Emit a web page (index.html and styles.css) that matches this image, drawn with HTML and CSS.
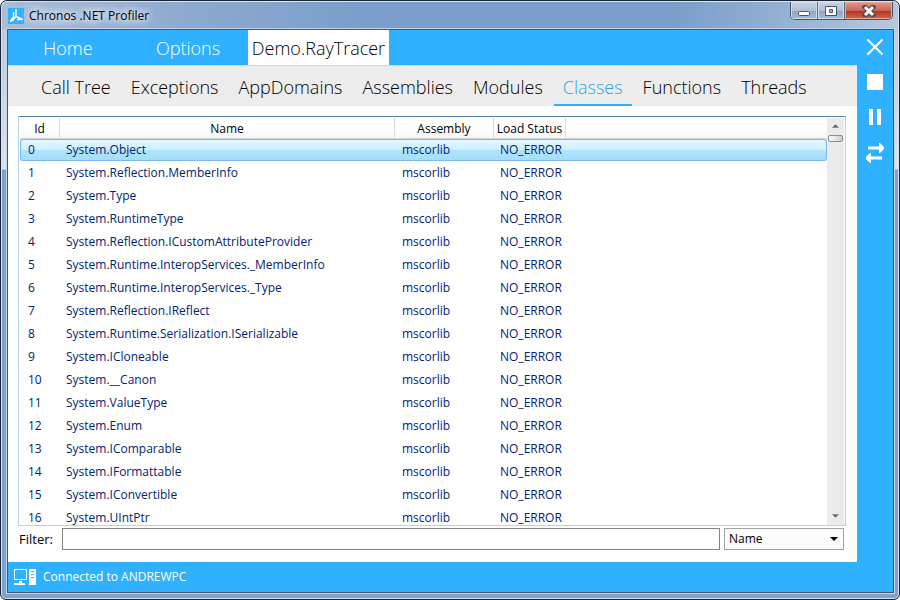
FILE: index.html
```html
<!DOCTYPE html>
<html lang="en">
<head>
<meta charset="utf-8">
<title>Chronos .NET Profiler</title>
<link rel="stylesheet" href="styles.css">
</head>
<body>
<div class="window">
  <header class="titlebar">
    <svg class="app-icon" viewBox="0 0 16 16" aria-hidden="true"><rect width="16" height="16" fill="#2fb1ff"/><path d="M8 1V8.500L14.500 11.500H9M8 8.500L3.500 13.500M5.500 4V9L2 13.500" fill="none" stroke="#fff" stroke-width="1.400"/></svg>
    <h1 class="title">Chronos .NET Profiler</h1>
    <div class="caption-buttons">
      <button class="cap" aria-label="Minimize"><svg viewBox="0 0 14 12"><rect x="1.500" y="6.500" width="11" height="4" rx="1" fill="#fff" stroke="#4c5568"/></svg></button>
      <button class="cap" aria-label="Maximize"><svg viewBox="0 0 14 12"><path d="M1.500 1.500h11v9h-11z M5.500 4.500h3v3h-3z" fill="#fff" fill-rule="evenodd" stroke="#4c5568"/></svg></button>
      <button class="cap cap-close" aria-label="Close window"><svg viewBox="0 0 14 12"><path d="M3 2L11 10M11 2L3 10" stroke="#5a4450" stroke-width="5" stroke-linecap="square"/><path d="M3 2L11 10M11 2L3 10" stroke="#fff" stroke-width="3"/></svg></button>
    </div>
  </header>
  <div class="client">
    <div class="upper">
      <main class="main">
        <nav class="tabs" aria-label="Pages">
          <a href="#home">Home</a>
          <a href="#options">Options</a>
          <a href="#demo" class="active">Demo.RayTracer</a>
        </nav>
        <nav class="subtabs" aria-label="Views">
          <a href="#calltree">Call Tree</a>
          <a href="#exceptions">Exceptions</a>
          <a href="#appdomains">AppDomains</a>
          <a href="#assemblies">Assemblies</a>
          <a href="#modules">Modules</a>
          <a href="#classes" class="active">Classes</a>
          <a href="#functions">Functions</a>
          <a href="#threads">Threads</a>
        </nav>
        <section class="content">
          <div class="list">
            <div class="viewport">
              <table>
                <colgroup><col class="c-id"><col class="c-name"><col class="c-asm"><col class="c-load"><col></colgroup>
                <thead><tr><th>Id</th><th>Name</th><th>Assembly</th><th>Load Status</th><td></td></tr></thead>
                <tbody>
                  <tr class="selected"><td>0</td><td>System.Object</td><td>mscorlib</td><td>NO_ERROR</td><td></td></tr>
                  <tr><td>1</td><td>System.Reflection.MemberInfo</td><td>mscorlib</td><td>NO_ERROR</td><td></td></tr>
                  <tr><td>2</td><td>System.Type</td><td>mscorlib</td><td>NO_ERROR</td><td></td></tr>
                  <tr><td>3</td><td>System.RuntimeType</td><td>mscorlib</td><td>NO_ERROR</td><td></td></tr>
                  <tr><td>4</td><td>System.Reflection.ICustomAttributeProvider</td><td>mscorlib</td><td>NO_ERROR</td><td></td></tr>
                  <tr><td>5</td><td>System.Runtime.InteropServices._MemberInfo</td><td>mscorlib</td><td>NO_ERROR</td><td></td></tr>
                  <tr><td>6</td><td>System.Runtime.InteropServices._Type</td><td>mscorlib</td><td>NO_ERROR</td><td></td></tr>
                  <tr><td>7</td><td>System.Reflection.IReflect</td><td>mscorlib</td><td>NO_ERROR</td><td></td></tr>
                  <tr><td>8</td><td>System.Runtime.Serialization.ISerializable</td><td>mscorlib</td><td>NO_ERROR</td><td></td></tr>
                  <tr><td>9</td><td>System.ICloneable</td><td>mscorlib</td><td>NO_ERROR</td><td></td></tr>
                  <tr><td>10</td><td>System.__Canon</td><td>mscorlib</td><td>NO_ERROR</td><td></td></tr>
                  <tr><td>11</td><td>System.ValueType</td><td>mscorlib</td><td>NO_ERROR</td><td></td></tr>
                  <tr><td>12</td><td>System.Enum</td><td>mscorlib</td><td>NO_ERROR</td><td></td></tr>
                  <tr><td>13</td><td>System.IComparable</td><td>mscorlib</td><td>NO_ERROR</td><td></td></tr>
                  <tr><td>14</td><td>System.IFormattable</td><td>mscorlib</td><td>NO_ERROR</td><td></td></tr>
                  <tr><td>15</td><td>System.IConvertible</td><td>mscorlib</td><td>NO_ERROR</td><td></td></tr>
                  <tr><td>16</td><td>System.UIntPtr</td><td>mscorlib</td><td>NO_ERROR</td><td></td></tr>
                </tbody>
              </table>
            </div>
            <div class="scrollbar" aria-hidden="true">
              <svg viewBox="0 0 8 4"><path d="M0 4L4 0L8 4z"/></svg>
              <div class="thumb"></div>
              <svg class="down" viewBox="0 0 8 4"><path d="M0 0L4 4L8 0z"/></svg>
            </div>
          </div>
          <form class="filter">
            <label for="filter">Filter:</label>
            <input id="filter" type="text">
            <div class="combo">
              <select aria-label="Filter column"><option>Name</option></select>
              <svg viewBox="0 0 8 4" aria-hidden="true"><path d="M0 0h8L4 4z"/></svg>
            </div>
          </form>
        </section>
      </main>
      <aside class="tools">
        <button aria-label="Close"><svg viewBox="0 0 18 18"><path d="M1.500 1.500L16.500 16.500M16.500 1.500L1.500 16.500" stroke="#fff" stroke-width="2"/></svg></button>
        <button aria-label="Stop"><svg viewBox="0 0 18 18"><path d="M1 1h16v16H1z" fill="#fff"/></svg></button>
        <button aria-label="Pause"><svg viewBox="0 0 18 18"><path d="M3 1h4v16H3zM11 1h4v16h-4z" fill="#fff"/></svg></button>
        <button aria-label="Switch"><svg class="switch" viewBox="0 0 18 20"><path d="M2 3.500h11V0h1l4 4v2l-4 4h-1V6.500H2zM16 13.500H5V10H4l-4 4v2l4 4h1v-3.500h11z" fill="#fff"/></svg></button>
      </aside>
    </div>
    <footer class="status">
      <svg viewBox="0 0 22 16" aria-hidden="true"><path d="M.5.5h12v10H.5z" fill="none" stroke="#fff"/><path d="M5 12h3v2h3v2H0v-2h5zM15 0h7v16h-7z" fill="#fff"/><path d="M17 2.500h3M17 5.500h3M17 8.500h3" stroke="#2fb1ff"/></svg>
      <span>Connected to ANDREWPC</span>
    </footer>
  </div>
</div>
</body>
</html>
```
FILE: styles.css
```css
* { box-sizing: border-box; }
body {
  margin: 0;
  height: 100vh;
  background: #fff;
  font: 12px/16px "Open Sans", sans-serif;
  color: #000;
}
.window {
  height: 100%;
  display: flex;
  flex-direction: column;
  padding: 0 5px 6px 6px;
  border: 1px solid #1d2433;
  border-radius: 7px 7px 6px 6px;
  background: linear-gradient(#b4c5da, #dce4ee 168px, #7fa3cd 169px);
  box-shadow: inset 0 0 0 1px #d5e3f3;
}
.titlebar {
  height: 28px;
  display: flex;
  align-items: center;
  gap: 5px;
  margin: 0 -4px 0 -5px;
  padding: 0 5px 0 6px;
  border-top: 1px solid #d5e3f3;
  border-radius: 6px 6px 0 0;
  background: linear-gradient(100deg, #a9bdd7, #8eaad0 20%, #7b9fca 40%, #7b9fca 75%, #8fadd2 85%, #b6c8de);
}
.app-icon { width: 16px; height: 16px; }
.title {
  margin: 0;
  font-size: 12px;
  font-weight: 400;
  text-shadow: 0 0 8px #fff, 0 0 10px #fff, 0 0 12px #fff;
}
.caption-buttons {
  display: flex;
  align-self: flex-start;
  margin-left: auto;
  border: 1px solid #46536b;
  border-top: 0;
  border-radius: 0 0 5px 5px;
  overflow: hidden;
}
.cap {
  width: 27px;
  height: 17px;
  display: grid;
  place-items: center;
  padding: 0;
  border: 0;
  border-right: 1px solid #5b6a82;
  background: linear-gradient(#c7d3e3, #afbfd4 50%, #8fa3bf 51%, #a8bbd3);
  box-shadow: inset 0 0 0 1px #d3deeb;
}
.cap svg { width: 14px; height: 12px; }
.cap-close {
  width: 47px;
  border-right: 0;
  background: linear-gradient(#dd9b8e, #cb6655 50%, #b3321c 51%, #cc6a50);
  box-shadow: inset 0 0 0 1px #e2a79b;
}
.client {
  flex: 1;
  min-height: 0;
  display: flex;
  flex-direction: column;
  border: 1px solid #45576f;
  background: #2fb1ff;
  box-shadow: 0 0 0 1px #c3d6ec;
}
.upper { flex: 1; min-height: 0; display: flex; }
.main { flex: 1; min-width: 0; display: flex; flex-direction: column; background: #fff; }
.tabs { display: flex; height: 35px; background: #2fb1ff; }
.tabs a, .subtabs a { color: #000; font-weight: 300; font-size: 18px; line-height: 36px; text-decoration: none; text-align: center; }
.tabs a { width: 120px; color: #fff; }
.tabs a.active { width: 141px; background: #fff; color: #000; }
.subtabs {
  height: 41px;
  display: flex;
  gap: 2px;
  padding-left: 24px;
  border-top: 1px solid #d8d8d8;
  background: #ededed;
}
.subtabs a { padding: 4px 9px 0; line-height: 34px; }
.subtabs a.active { color: #2fa5e8; border-bottom: 2px solid #2fb1ff; }
.content { flex: 1; min-height: 0; display: flex; flex-direction: column; gap: 2px; padding: 10px 11px 12px 10px; }
.list {
  flex: 1;
  min-height: 0;
  display: flex;
  padding: 1px 1px 0;
  border: 1px solid #b5d3e7;
  border-top-color: #4a82ad;
}
.viewport { flex: 1; min-width: 0; overflow: hidden; }
table { width: 100%; table-layout: fixed; border-collapse: separate; border-spacing: 0; }
.c-id { width: 40px; }
.c-name { width: 335px; }
.c-asm { width: 99px; }
.c-load { width: 72px; }
thead th, thead td {
  height: 21px;
  padding: 2px 0 0;
  border-bottom: 1px solid #d5d5d5;
  background: linear-gradient(#fff 50%, #f7f7f8);
  font-weight: 400;
}
thead th { border-right: 1px solid #dcdcdc; }
tbody td { height: 23px; padding: 0 7px; color: #042271; white-space: nowrap; }
tbody td:first-child { padding-left: 8px; }
tbody td:nth-child(2), tbody td:nth-child(4) { padding-left: 6px; }
.selected td {
  height: 22px;
  border: solid #7ab8ee;
  border-width: 1px 0;
  background: linear-gradient(#e3f7ff, #ccefff 50%, #b2e4fb 51%, #a2defa);
}
.selected td:first-child { border-left-width: 1px; border-radius: 3px 0 0 3px; padding-left: 7px; }
.selected td:last-child { border-right-width: 1px; border-radius: 0 3px 3px 0; }
.scrollbar {
  width: 17px;
  display: flex;
  flex-direction: column;
  align-items: center;
  padding: 6px 0 7px;
  background: #ebebeb;
}
.scrollbar svg { width: 7px; height: 4px; fill: #6b6b6b; }
.scrollbar .down { margin-top: auto; }
.thumb { width: 15px; height: 7px; margin-top: 7px; border: 1px solid #8b8b8b; border-radius: 2px; background: linear-gradient(90deg, #fff, #ccc); }
.filter { display: flex; align-items: center; gap: 4px; padding-right: 2px; }
.filter label { width: 40px; padding-left: 1px; font-size: 13px; }
.filter input { flex: 1; min-width: 0; height: 22px; border: 1px solid #858585; padding: 0 4px; background: #fff; font: inherit; }
.combo { position: relative; width: 120px; }
.combo svg { position: absolute; right: 6px; top: 9px; width: 8px; height: 4px; pointer-events: none; }
.filter select {
  display: block;
  width: 100%;
  height: 22px;
  padding: 0 4px;
  border: 1px solid #a3a3a3;
  border-radius: 0;
  appearance: none;
  background: #fcfcfc;
  font: inherit;
  color: #000;
}
.tools { width: 36px; display: flex; flex-direction: column; align-items: center; gap: 17px; padding-top: 8px; }
.tools button { padding: 0; border: 0; background: none; }
.tools svg { display: block; width: 18px; height: 18px; }
.tools .switch { height: 20px; }
.status { height: 30px; display: flex; align-items: center; gap: 7px; padding-left: 6px; color: #fff; }
.status svg { width: 22px; height: 16px; }
```
